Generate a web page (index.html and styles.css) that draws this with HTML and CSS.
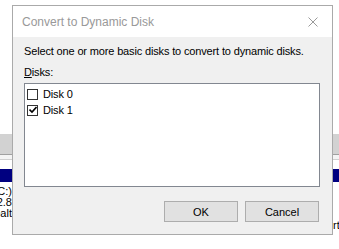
FILE: index.html
```html
<!DOCTYPE html>
<html lang="en">
<head>
    <meta charset="UTF-8">
    <meta name="viewport" content="width=device-width, initial-scale=1.0">
    <title>Convert to Dynamic Disk</title>
    <link rel="stylesheet" href="styles.css">
</head>
<body>
    <div class="backdrop">
        <div class="bd-top"></div>
        <div class="bd-band"></div>
        <div class="bd-rule"></div>
        <div class="bd-strip"></div>
        <div class="bd-rule light"></div>
        <div class="bd-gap"></div>
        <div class="bd-navy"></div>
        <div class="bd-rows">
            <div class="bd-col">
                <div class="bd-cell"><span>(C:)</span></div>
                <div class="bd-cell"><span>12.8</span></div>
                <div class="bd-cell"><span>Healt</span></div>
            </div>
            <div class="bd-col right">
                <div class="bd-cell low"><span>rt</span></div>
            </div>
        </div>
    </div>

    <div class="dialog">
        <div class="titlebar">
            <span class="title">Convert to Dynamic Disk</span>
            <svg class="close" width="10" height="10" viewBox="0 0 10 10">
                <path d="M0.5 0.5 L9.5 9.5 M9.5 0.5 L0.5 9.5" stroke="#9a9a9a" stroke-width="1" fill="none"/>
            </svg>
        </div>
        <div class="content">
            <div class="line">Select one or more basic disks to convert to dynamic disks.</div>
            <div class="line label"><u>D</u>isks:</div>
            <div class="listbox">
                <div class="row">
                    <span class="check"></span>
                    <span>Disk 0</span>
                </div>
                <div class="row">
                    <span class="check">
                        <svg width="8" height="8" viewBox="0 0 8 8">
                            <path d="M0.5 3.5 L3 6 L7.5 1" stroke="#000" stroke-width="1.6" fill="none"/>
                        </svg>
                    </span>
                    <span>Disk 1</span>
                </div>
            </div>
            <div class="buttons">
                <button class="btn">OK</button>
                <button class="btn">Cancel</button>
            </div>
        </div>
    </div>
</body>
</html>
```

FILE: styles.css
```css
body {
    margin: 0;
    width: 339px;
    height: 249px;
    overflow: hidden;
    position: relative;
    background: #fff;
    font-family: "Liberation Sans", Arial, sans-serif;
    color: #000;
}

/* window behind the dialog */
.bd-top { height: 134px; background: #fff; }
.bd-band { height: 20px; background: #d2d2d2; }
.bd-rule { height: 1px; background: #a0a0a0; }
.bd-rule.light { background: #d0d0d0; }
.bd-strip { height: 4px; background: #f4f4f4; }
.bd-gap { height: 9px; background: #fff; }
.bd-navy { height: 13px; background: #000080; }
.bd-rows {
    display: flex;
    justify-content: space-between;
    font-size: 11px;
}
.bd-col {
    width: 12px;
    overflow: hidden;
    padding-top: 4px;
}
.bd-col.right {
    width: 7px;
    padding-top: 38px;
}
.bd-cell {
    height: 11px;
    line-height: 11px;
    display: flex;
    justify-content: flex-end;
}
.bd-cell span {
    flex: none;
    white-space: nowrap;
}
.bd-cell.low { justify-content: flex-start; margin-left: 1px; }

/* dialog */
.dialog {
    position: absolute;
    left: 12px;
    top: 5px;
    width: 319px;
    height: 228px;
    border: 1px solid #aaa;
    background: #f0f0f0;
    display: flex;
    flex-direction: column;
}
.titlebar {
    height: 31px;
    background: #fff;
    display: flex;
    align-items: center;
    justify-content: space-between;
    padding: 0 14px 0 9px;
    flex: none;
}
.title {
    font-size: 12px;
    color: #999;
}
.close { display: block; margin-top: 1px; }

.content {
    flex: 1;
    padding: 8px 12px 0 11px;
    font-size: 11px;
    letter-spacing: -0.15px;
}
.line {
    line-height: 13px;
    white-space: nowrap;
}
.label { margin-top: 8px; }
.listbox {
    margin-top: 4px;
    height: 100px;
    border: 1px solid #828790;
    background: #fff;
    padding: 2px 2px 0;
}
.row {
    height: 16px;
    display: flex;
    align-items: center;
    gap: 5px;
}
.check {
    width: 9px;
    height: 9px;
    border: 1px solid #333;
    background: #fff;
    display: flex;
    align-items: center;
    justify-content: center;
}
.check svg { display: block; }

.buttons {
    margin-top: 14px;
    display: flex;
    justify-content: flex-end;
    gap: 7px;
    padding-right: 1px;
}
.btn {
    width: 74px;
    height: 21px;
    border: 1px solid #adadad;
    background: #e1e1e1;
    font-family: "Liberation Sans", Arial, sans-serif;
    font-size: 11px;
    color: #000;
    padding: 0;
}
```
